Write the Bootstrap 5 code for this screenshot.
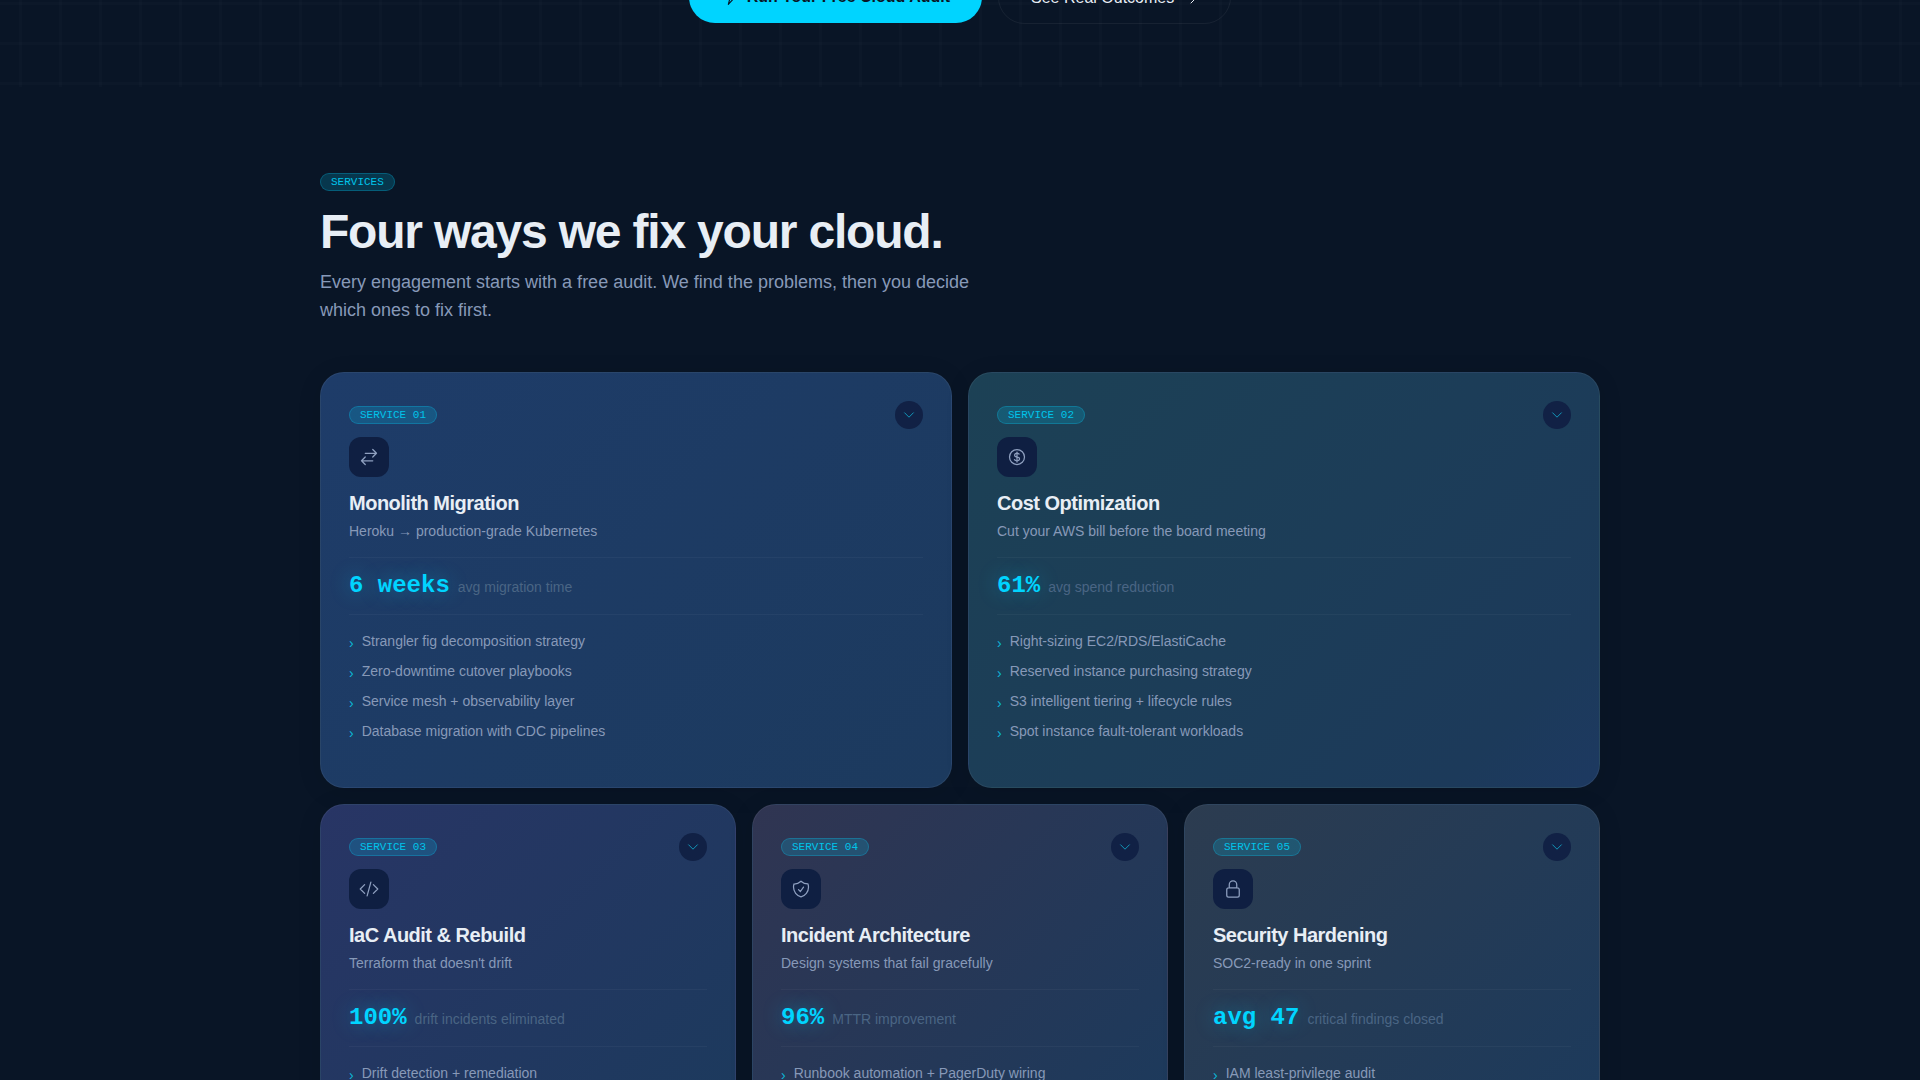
<!DOCTYPE html>
<html lang="en">
<head>
<meta charset="utf-8">
<meta name="viewport" content="width=device-width, initial-scale=1">
<title>Cloud services</title>
<link rel="stylesheet" href="https://cdn.jsdelivr.net/npm/bootstrap@5.3.0/dist/css/bootstrap.min.css">
<style>
  :root { --cyan: #00d4ff; --ink: #091526; --muted-blue: #8799b8; }
  body { background: var(--ink); color: #e8eef5; font-family: "Liberation Sans", Arial, sans-serif; }
  .page-shell { max-width: 1328px; }
  svg { fill: none; stroke: currentColor; stroke-width: 1.5; stroke-linecap: round; stroke-linejoin: round; flex: none; }

  .hero {
    background-image:
      linear-gradient(rgba(255,255,255,.012) 3px, transparent 3px),
      linear-gradient(90deg, rgba(255,255,255,.012) 3px, transparent 3px);
    background-size: 40px 40px;
    background-position: 19px 2px;
    padding-bottom: 63px;
  }
  .hero-actions { margin-top: -29px; }
  .btn-hero { height: 52px; padding: 0 32px; border: 0; --bs-btn-font-weight: 700; --bs-btn-color: var(--ink); --bs-btn-bg: var(--cyan); --bs-btn-hover-bg: #33ddff; }
  .btn-quiet { height: 53px; padding: 0 32px; --bs-btn-color: #e8edf5; --bs-btn-border-color: rgba(255,255,255,.06); --bs-btn-hover-color: #fff; --bs-btn-hover-border-color: var(--cyan); }

  .services { padding-top: 86px; }
  .tag {
    display: inline-block; height: 18px; padding: 0 10px; line-height: 16px;
    font-family: "Liberation Mono", monospace; font-size: 11px; color: #00c4ea;
    background: rgba(0,212,255,.18); border: 1px solid rgba(0,212,255,.25); border-radius: 9px;
  }
  .headline { font-size: 48px; line-height: 56px; font-weight: 700; letter-spacing: -0.025em; margin: 13px 0 8px; }
  .intro { font-size: 18px; line-height: 28px; color: var(--muted-blue); max-width: 672px; margin-bottom: 48px; }

  .svc { background: linear-gradient(135deg, var(--from), var(--to)); border: 1px solid rgba(255,255,255,.06); border-radius: 24px; padding: 28px; color: inherit; box-shadow: 0 4px 24px rgba(0,0,0,.1); }
  .svc-blue { --from: #1e3c69; --to: #1c3a5e; }
  .svc-teal { background: linear-gradient(135deg, #1c4155, #1c3d58 50%, #1c3a5a 85%, #1d3961); }
  .svc-violet { --from: #283565; --to: #1c3a5d; }
  .svc-plum { --from: #303552; --to: #1c3a5c; }
  .svc-slate { --from: #2c3c50; --to: #1c3a5c; }
  .toggle { width: 28px; height: 28px; padding: 0; border: 0; background: #112145; color: #12a6c8; }
  .glyph { width: 40px; height: 40px; border-radius: 12px; background: #0f1f42; color: #8fa0c0; }
  .svc-title { font-size: 20px; line-height: 28px; font-weight: 700; letter-spacing: -0.025em; margin: 12px 0 4px; }
  .svc-sub { font-size: 14px; line-height: 20px; color: var(--muted-blue); margin-bottom: 16px; }
  .stat { border-top: 1px solid rgba(255,255,255,.04); border-bottom: 1px solid rgba(255,255,255,.04); padding: 12px 0; margin-bottom: 16px; }
  .stat-value { font: 700 24px/32px "Liberation Mono", monospace; color: var(--cyan); text-shadow: 0 0 20px rgba(0,212,255,.4); }
  .stat-label { font-size: 14px; line-height: 20px; color: #4a6584; }
  .points { gap: 10px; font-size: 14px; line-height: 20px; color: var(--muted-blue); margin-bottom: 18px; }
  .points li { display: flex; gap: 8px; }
  .points li::before { content: "›"; color: #0cb8d8; padding-top: 4px; line-height: 16px; }
</style>
<script src="https://cdn.jsdelivr.net/npm/bootstrap@5.3.0/dist/js/bootstrap.bundle.min.js"></script>
</head>
<body>
<div class="vh-100 overflow-hidden">
  <header class="hero overflow-hidden">
    <div class="hero-actions d-flex justify-content-center gap-3">
      <a href="#audit" class="btn btn-hero rounded-pill d-inline-flex align-items-center gap-2">
        <svg width="18" height="18" viewBox="0 0 24 24"><path d="m3.75 13.5 10.5-11.25L12 10.5h8.25L9.75 21.75 12 13.5H3.75Z"/></svg>
        Run Your Free Cloud Audit
      </a>
      <a href="#outcomes" class="btn btn-quiet rounded-pill d-inline-flex align-items-center gap-2">
        See Real Outcomes
        <svg width="16" height="16" viewBox="0 0 24 24"><path d="M13.5 4.5 21 12m0 0-7.5 7.5M21 12H3"/></svg>
      </a>
    </div>
  </header>

  <main class="services page-shell container-fluid px-4">
    <div class="d-flex"><span class="tag">SERVICES</span></div>
    <h2 class="headline">Four ways we fix your cloud.</h2>
    <p class="intro">Every engagement starts with a free audit. We find the problems, then you decide which ones to fix first.</p>

    <div class="row g-3">
      <div class="col-lg-6">
        <article class="card svc svc-blue h-100">
          <div class="d-flex justify-content-between align-items-center mb-2">
            <span class="tag">SERVICE 01</span>
            <button type="button" class="toggle rounded-circle d-flex align-items-center justify-content-center" aria-label="Expand Monolith Migration"><svg width="14" height="14" viewBox="0 0 24 24"><path d="m19.5 8.25-7.5 7.5-7.5-7.5"/></svg></button>
          </div>
          <div class="glyph d-flex align-items-center justify-content-center"><svg width="20" height="20" viewBox="0 0 24 24"><path d="M7.5 21 3 16.5m0 0L7.5 12M3 16.5h13.5m0-13.5L21 7.5m0 0L16.5 12M21 7.5H7.5"/></svg></div>
          <h3 class="svc-title">Monolith Migration</h3>
          <p class="svc-sub">Heroku → production-grade Kubernetes</p>
          <div class="stat d-flex align-items-baseline gap-2"><span class="stat-value">6 weeks</span><span class="stat-label">avg migration time</span></div>
          <ul class="points list-unstyled d-flex flex-column">
            <li>Strangler fig decomposition strategy</li>
            <li>Zero-downtime cutover playbooks</li>
            <li>Service mesh + observability layer</li>
            <li>Database migration with CDC pipelines</li>
          </ul>
        </article>
      </div>
      <div class="col-lg-6">
        <article class="card svc svc-teal h-100">
          <div class="d-flex justify-content-between align-items-center mb-2">
            <span class="tag">SERVICE 02</span>
            <button type="button" class="toggle rounded-circle d-flex align-items-center justify-content-center" aria-label="Expand Cost Optimization"><svg width="14" height="14" viewBox="0 0 24 24"><path d="m19.5 8.25-7.5 7.5-7.5-7.5"/></svg></button>
          </div>
          <div class="glyph d-flex align-items-center justify-content-center"><svg width="20" height="20" viewBox="0 0 24 24"><path d="M12 6v12m-3-2.818.879.659c1.171.879 3.07.879 4.242 0 1.172-.879 1.172-2.303 0-3.182C13.536 12.219 12.768 12 12 12c-.725 0-1.45-.22-2.003-.659-1.106-.879-1.106-2.303 0-3.182s2.9-.879 4.006 0l.415.33M21 12a9 9 0 1 1-18 0 9 9 0 0 1 18 0Z"/></svg></div>
          <h3 class="svc-title">Cost Optimization</h3>
          <p class="svc-sub">Cut your AWS bill before the board meeting</p>
          <div class="stat d-flex align-items-baseline gap-2"><span class="stat-value">61%</span><span class="stat-label">avg spend reduction</span></div>
          <ul class="points list-unstyled d-flex flex-column">
            <li>Right-sizing EC2/RDS/ElastiCache</li>
            <li>Reserved instance purchasing strategy</li>
            <li>S3 intelligent tiering + lifecycle rules</li>
            <li>Spot instance fault-tolerant workloads</li>
          </ul>
        </article>
      </div>
      <div class="col-lg-4">
        <article class="card svc svc-violet h-100">
          <div class="d-flex justify-content-between align-items-center mb-2">
            <span class="tag">SERVICE 03</span>
            <button type="button" class="toggle rounded-circle d-flex align-items-center justify-content-center" aria-label="Expand IaC Audit &amp; Rebuild"><svg width="14" height="14" viewBox="0 0 24 24"><path d="m19.5 8.25-7.5 7.5-7.5-7.5"/></svg></button>
          </div>
          <div class="glyph d-flex align-items-center justify-content-center"><svg width="20" height="20" viewBox="0 0 24 24"><path d="M17.25 6.75 22.5 12l-5.25 5.25m-10.5 0L1.5 12l5.25-5.25m7.5-3-4.5 16.5"/></svg></div>
          <h3 class="svc-title">IaC Audit &amp; Rebuild</h3>
          <p class="svc-sub">Terraform that doesn't drift</p>
          <div class="stat d-flex align-items-baseline gap-2"><span class="stat-value">100%</span><span class="stat-label">drift incidents eliminated</span></div>
          <ul class="points list-unstyled d-flex flex-column">
            <li>Drift detection + remediation</li>
          </ul>
        </article>
      </div>
      <div class="col-lg-4">
        <article class="card svc svc-plum h-100">
          <div class="d-flex justify-content-between align-items-center mb-2">
            <span class="tag">SERVICE 04</span>
            <button type="button" class="toggle rounded-circle d-flex align-items-center justify-content-center" aria-label="Expand Incident Architecture"><svg width="14" height="14" viewBox="0 0 24 24"><path d="m19.5 8.25-7.5 7.5-7.5-7.5"/></svg></button>
          </div>
          <div class="glyph d-flex align-items-center justify-content-center"><svg width="20" height="20" viewBox="0 0 24 24"><path d="M9 12.75 11.25 15 15 9.75m-3-7.036A11.959 11.959 0 0 1 3.598 6 11.99 11.99 0 0 0 3 9.749c0 5.592 3.824 10.29 9 11.623 5.176-1.332 9-6.03 9-11.622 0-1.31-.21-2.571-.598-3.751h-.152c-3.196 0-6.1-1.248-8.25-3.285Z"/></svg></div>
          <h3 class="svc-title">Incident Architecture</h3>
          <p class="svc-sub">Design systems that fail gracefully</p>
          <div class="stat d-flex align-items-baseline gap-2"><span class="stat-value">96%</span><span class="stat-label">MTTR improvement</span></div>
          <ul class="points list-unstyled d-flex flex-column">
            <li>Runbook automation + PagerDuty wiring</li>
          </ul>
        </article>
      </div>
      <div class="col-lg-4">
        <article class="card svc svc-slate h-100">
          <div class="d-flex justify-content-between align-items-center mb-2">
            <span class="tag">SERVICE 05</span>
            <button type="button" class="toggle rounded-circle d-flex align-items-center justify-content-center" aria-label="Expand Security Hardening"><svg width="14" height="14" viewBox="0 0 24 24"><path d="m19.5 8.25-7.5 7.5-7.5-7.5"/></svg></button>
          </div>
          <div class="glyph d-flex align-items-center justify-content-center"><svg width="20" height="20" viewBox="0 0 24 24"><path d="M16.5 10.5V6.75a4.5 4.5 0 1 0-9 0v3.75m-.75 11.25h10.5a2.25 2.25 0 0 0 2.25-2.25v-6.75a2.25 2.25 0 0 0-2.25-2.25H6.75a2.25 2.25 0 0 0-2.25 2.25v6.75a2.25 2.25 0 0 0 2.25 2.25Z"/></svg></div>
          <h3 class="svc-title">Security Hardening</h3>
          <p class="svc-sub">SOC2-ready in one sprint</p>
          <div class="stat d-flex align-items-baseline gap-2"><span class="stat-value">avg 47</span><span class="stat-label">critical findings closed</span></div>
          <ul class="points list-unstyled d-flex flex-column">
            <li>IAM least-privilege audit</li>
          </ul>
        </article>
      </div>
    </div>
  </main>
</div>
</body>
</html>
